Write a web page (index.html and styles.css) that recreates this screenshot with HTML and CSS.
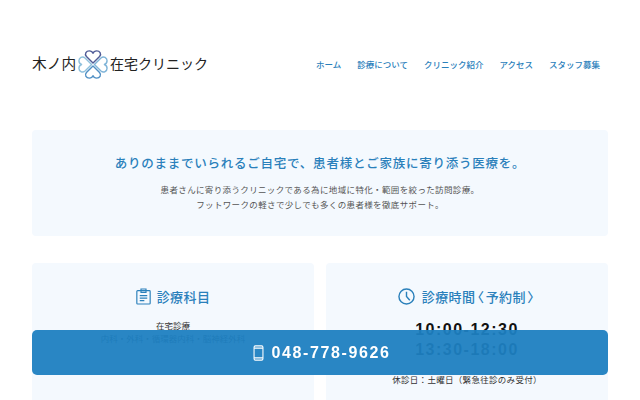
FILE: index.html
```html
<!DOCTYPE html>
<html lang="ja">
<head>
<meta charset="utf-8">
<title>木ノ内在宅クリニック</title>
<link rel="stylesheet" href="styles.css">
</head>
<body>
<div class="page">
  <header class="header">
    <a class="logo">
      <span class="logo-name">木ノ内</span>
      <svg class="clover" viewBox="0 0 32 32" width="30" height="31" fill="none" stroke-width="1.5" stroke-linejoin="round">
        <path d="M16 14.5 L9 7.5 C6.5 4.5 9 1.5 12 1.5 C14 1.5 15.4 2.6 16 4 C16.6 2.6 18 1.5 20 1.5 C23 1.5 25.5 4.5 23 7.5 Z" stroke="#4d5a96"/>
        <path d="M14.5 16 L7.5 9 C4.5 6.5 1 9 1 12 C1 14 2.4 15.4 3.8 16 C2.4 16.6 1 18 1 20 C1 23 4.5 25.5 7.5 23 Z" stroke="#8fc0dc"/>
        <path d="M17.5 16 L24.5 9 C27.5 6.5 31 9 31 12 C31 14 29.6 15.4 28.2 16 C29.6 16.6 31 18 31 20 C31 23 27.5 25.5 24.5 23 Z" stroke="#7fb4d8"/>
        <path d="M16 17.5 L9 24.5 C6.5 27.5 9 30.5 12 30.5 C14 30.5 15.4 29.4 16 28 C16.6 29.4 18 30.5 20 30.5 C23 30.5 25.5 27.5 23 24.5 Z" stroke="#4f8fc4"/>
      </svg>
      <span class="logo-text">在宅クリニック</span>
    </a>
    <nav class="nav">
      <a>ホーム</a>
      <a>診療について</a>
      <a>クリニック紹介</a>
      <a>アクセス</a>
      <a>スタッフ募集</a>
    </nav>
  </header>

  <section class="hero">
    <h1>ありのままでいられるご自宅で、患者様とご家族に寄り添う医療を。</h1>
    <p>患者さんに寄り添うクリニックである為に地域に特化・範囲を絞った訪問診療。<br>フットワークの軽さで少しでも多くの患者様を徹底サポート。</p>
  </section>

  <section class="cards">
    <article class="card">
      <h2>
        <svg class="icon" viewBox="0 0 18 20" width="15" height="17" fill="none" stroke="#2a80bb" stroke-width="1.4">
          <rect x="1" y="3" width="16" height="16" rx="1"/>
          <path d="M6 3V1H12V3M6 3V5H12V3M4.5 9H13.5M4.5 12H13.5M4.5 15H10"/>
        </svg>
        <span>診療科目</span>
      </h2>
      <p class="dept-first">在宅診療</p>
      <p class="dept">内科・外科・循環器内科・脳神経外科</p>
    </article>
    <article class="card">
      <h2>
        <svg class="icon clock" viewBox="0 0 18 18" width="17" height="17" fill="none" stroke="#2a80bb" stroke-width="1.5">
          <circle cx="9" cy="9" r="8"/>
          <path d="M9 4V9L12.5 13"/>
        </svg>
        <span>診療時間<span class="bracket">〈</span>予約制<span class="bracket">〉</span></span>
      </h2>
      <p class="time-first">10:00-12:30</p>
      <p class="time">13:30-18:00</p>
      <p class="closed">休診日：土曜日（緊急往診のみ受付）</p>
    </article>
  </section>
</div>

<a class="call">
  <svg class="phone" viewBox="0 0 12 18" width="11" height="16" fill="none" stroke="#fff" stroke-width="1.2">
    <rect x="1" y="1" width="10" height="16" rx="1.5"/>
    <path d="M1 3.5H11M1 14.5H11"/>
  </svg>
  048-778-9626
</a>
</body>
</html>
```

FILE: styles.css
```css
* {
  box-sizing: border-box;
  margin: 0;
  padding: 0;
}

html,
body {
  height: 400px;
  overflow: hidden;
}

body {
  background: #fff;
  color: #333;
  font-family: "Noto Sans CJK JP", "Noto Sans", sans-serif;
}

.page {
  padding: 48px 32px 0;
}

.header {
  display: flex;
  align-items: center;
  justify-content: space-between;
  height: 32px;
  margin-bottom: 50px;
}

.logo {
  display: flex;
  align-items: center;
  gap: 2px;
  color: #222;
}

.logo-name {
  padding-bottom: 2px;
  font-size: 14.7px;
  line-height: 30px;
}

.logo-text {
  padding-bottom: 2px;
  font-size: 14px;
  line-height: 30px;
}

.clover {
  display: block;
}

.nav {
  display: flex;
  gap: 16px;
  padding-right: 8px;
}

.nav a {
  color: #2a80bb;
  font-size: 8.5px;
  font-weight: 500;
  line-height: 32px;
}

.hero {
  height: 106px;
  margin-bottom: 27px;
  padding-top: 23px;
  background: #f4f9fe;
  border-radius: 4px;
  text-align: center;
}

.hero h1 {
  color: #2a80bb;
  font-size: 12.5px;
  font-weight: 500;
  letter-spacing: 0.76px;
  line-height: 20px;
}

.hero p {
  margin-top: 9px;
  color: #555;
  font-size: 8.5px;
  line-height: 15px;
  letter-spacing: 0.36px;
}

.cards {
  display: grid;
  grid-template-columns: 282px 282px;
  gap: 12px;
}

.card {
  height: 180px;
  padding-top: 23px;
  background: #f4f9fe;
  border-radius: 4px;
  text-align: center;
}

.card h2 {
  display: flex;
  align-items: center;
  justify-content: center;
  gap: 6px;
  height: 20px;
  color: #2a80bb;
  font-size: 13px;
  font-weight: 500;
  letter-spacing: 0.4px;
}

.clock {
  margin-right: 1px;
}

.bracket {
  padding: 0 1.7px;
  font-feature-settings: "palt";
}

.dept-first {
  margin-top: 13px;
  color: #333;
  font-size: 8.5px;
  line-height: 13px;
}

.dept {
  color: #333;
  font-size: 8.5px;
  line-height: 13px;
}

.time-first {
  margin-top: 14px;
  color: #111;
  font-family: "Liberation Sans", sans-serif;
  font-size: 16px;
  font-weight: 700;
  letter-spacing: 1.5px;
  line-height: 20px;
}

.time {
  color: #111;
  font-family: "Liberation Sans", sans-serif;
  font-size: 16px;
  font-weight: 700;
  letter-spacing: 1.5px;
  line-height: 20px;
}

.closed {
  margin-top: 12px;
  color: #333;
  font-size: 8.5px;
  line-height: 14px;
  letter-spacing: 0.3px;
}

.call {
  position: fixed;
  left: 32px;
  top: 330px;
  display: flex;
  align-items: center;
  justify-content: center;
  gap: 8px;
  width: 576px;
  height: 45px;
  padding-left: 3px;
  background: rgba(30, 127, 193, 0.95);
  border-radius: 5px;
  color: #fff;
  font-family: "Liberation Sans", sans-serif;
  font-size: 16px;
  font-weight: 700;
  letter-spacing: 1.6px;
}

.phone {
  display: block;
}
```
